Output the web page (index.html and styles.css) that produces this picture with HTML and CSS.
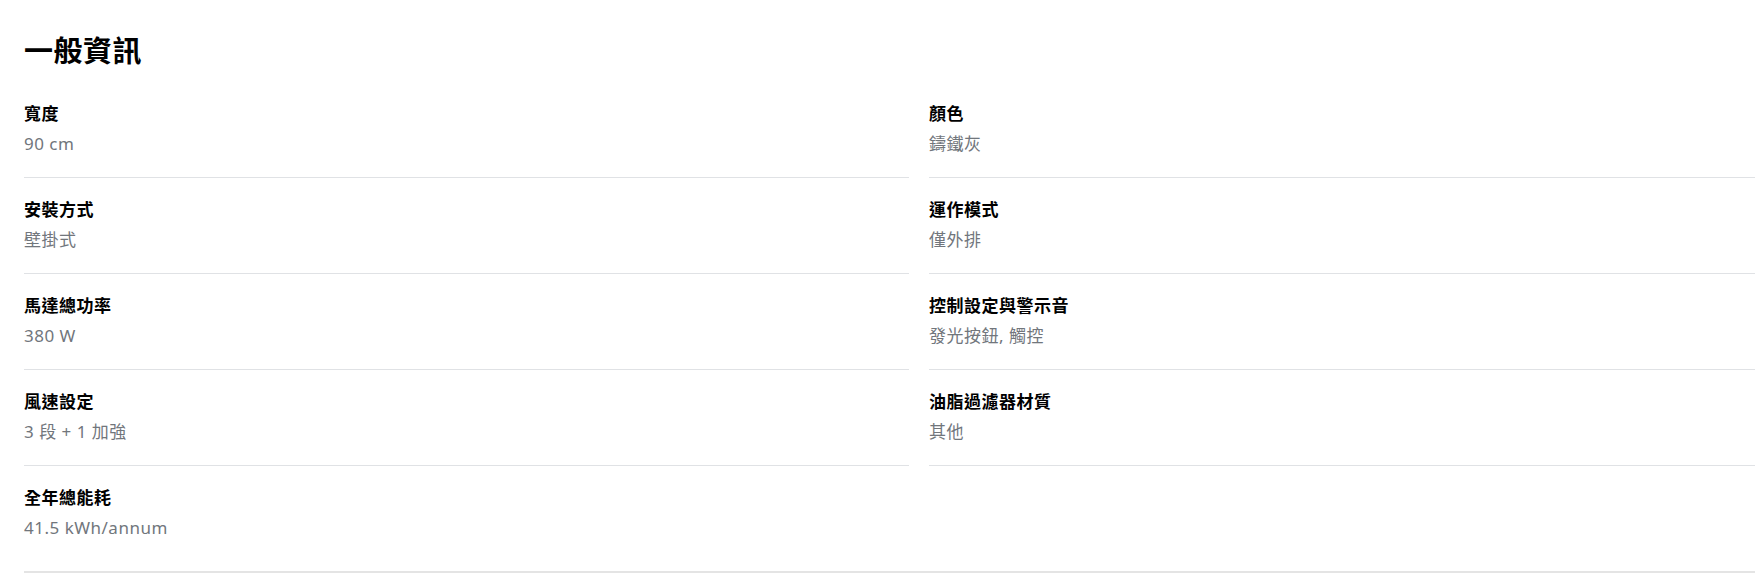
FILE: index.html
```html
<!DOCTYPE html>
<html lang="zh-Hant">
<head>
<meta charset="utf-8">
<title>一般資訊</title>
<link rel="stylesheet" href="styles.css">
</head>
<body>
<section class="specs">
  <h2 class="specs-title">一般資訊</h2>
  <dl class="specs-grid">
    <div class="spec"><dt class="spec-label">寬度</dt><dd class="spec-value">90 cm</dd></div>
    <div class="spec"><dt class="spec-label">顏色</dt><dd class="spec-value">鑄鐵灰</dd></div>
    <div class="spec"><dt class="spec-label">安裝方式</dt><dd class="spec-value">壁掛式</dd></div>
    <div class="spec"><dt class="spec-label">運作模式</dt><dd class="spec-value">僅外排</dd></div>
    <div class="spec"><dt class="spec-label">馬達總功率</dt><dd class="spec-value">380 W</dd></div>
    <div class="spec"><dt class="spec-label">控制設定與警示音</dt><dd class="spec-value">發光按鈕, 觸控</dd></div>
    <div class="spec"><dt class="spec-label">風速設定</dt><dd class="spec-value">3 段 + 1 加強</dd></div>
    <div class="spec"><dt class="spec-label">油脂過濾器材質</dt><dd class="spec-value">其他</dd></div>
    <div class="spec spec-last"><dt class="spec-label">全年總能耗</dt><dd class="spec-value">41.5 kWh/annum</dd></div>
  </dl>
</section>
</body>
</html>
```
FILE: styles.css
```css
html, body {
  margin: 0;
  padding: 0;
  background: #ffffff;
  overflow: hidden;
}

body {
  font-family: "Noto Sans", "Noto Sans CJK TC", sans-serif;
  color: #000000;
  letter-spacing: 0.5px;
}

.specs {
  width: 1790px;
  padding-left: 24px;
}

.specs-title {
  margin: 33px 0 13px;
  font-size: 29px;
  line-height: 36px;
  font-weight: 700;
  color: #000000;
}

.specs-grid {
  margin: 0;
  display: grid;
  grid-template-columns: 885px 885px;
  column-gap: 20px;
  padding-bottom: 10px;
  border-bottom: 2px solid #e4e4e4;
}

.spec {
  padding: 20px 0 21px;
  border-bottom: 1px solid #e0e2e5;
}

.spec-last {
  border-bottom: none;
}

.spec-label {
  margin: 0 0 6px;
  font-size: 17px;
  line-height: 24px;
  font-weight: 700;
  color: #000000;
}

.spec-value {
  margin: 0;
  font-size: 17px;
  line-height: 24px;
  color: #71767c;
}
```
